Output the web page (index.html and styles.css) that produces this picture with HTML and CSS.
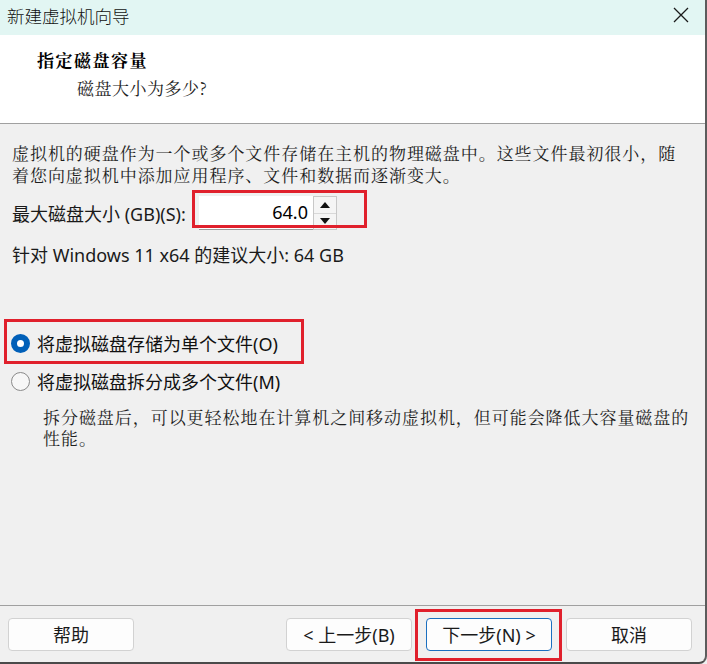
FILE: index.html
```html
<!DOCTYPE html>
<html lang="zh-CN">
<head>
<meta charset="utf-8">
<title>新建虚拟机向导</title>
<link rel="stylesheet" href="styles.css">
</head>
<body>
<div class="window">
  <div class="titlebar">
    <span class="title">新建虚拟机向导</span>
    <span class="close" aria-label="关闭">
      <svg width="16" height="16" viewBox="0 0 16 16"><path d="M1 1 L15 15 M15 1 L1 15" stroke="#1a1a1a" stroke-width="1.3" fill="none"/></svg>
    </span>
  </div>
  <div class="header">
    <div class="heading">指定磁盘容量</div>
    <div class="subheading">磁盘大小为多少?</div>
  </div>
  <div class="content">
    <p class="intro">虚拟机的硬盘作为一个或多个文件存储在主机的物理磁盘中。这些文件最初很小，随着您向虚拟机中添加应用程序、文件和数据而逐渐变大。</p>
    <div class="size-row">
      <label class="size-label">最大磁盘大小 (GB)(S):</label>
      <div class="spin">
        <div class="spin-input">64.0</div>
        <div class="spin-buttons">
          <div class="spin-btn"><svg width="12" height="8" viewBox="0 0 12 8"><path d="M6 1 L11 7 L1 7 Z" fill="#111"/></svg></div>
          <div class="spin-btn"><svg width="12" height="8" viewBox="0 0 12 8"><path d="M1 1 L11 1 L6 7 Z" fill="#111"/></svg></div>
        </div>
      </div>
      <div class="mark mark-spin"></div>
    </div>
    <div class="recommend">针对 Windows 11 x64 的建议大小: 64 GB</div>
    <div class="options">
      <div class="radio-row checked">
        <span class="radio"></span>
        <span class="radio-label">将虚拟磁盘存储为单个文件(O)</span>
        <div class="mark mark-radio"></div>
      </div>
      <div class="radio-row">
        <span class="radio"></span>
        <span class="radio-label">将虚拟磁盘拆分成多个文件(M)</span>
      </div>
      <p class="desc">拆分磁盘后，可以更轻松地在计算机之间移动虚拟机，但可能会降低大容量磁盘的性能。</p>
    </div>
  </div>
  <div class="footer">
    <button class="btn">帮助</button>
    <div class="btn-group">
      <button class="btn">&lt; 上一步(B)</button>
      <div class="btn-wrap">
        <button class="btn default">下一步(N) &gt;</button>
        <div class="mark mark-next"></div>
      </div>
      <button class="btn">取消</button>
    </div>
  </div>
</div>
</body>
</html>
```

FILE: styles.css
```css
html, body {
  margin: 0;
  padding: 0;
}
body {
  width: 707px;
  height: 664px;
  overflow: hidden;
  background: #f0f0f0;
  font-family: "Segoe UI", "Noto Sans", "Noto Sans CJK SC", sans-serif;
  color: #1a1a1a;
}
.window {
  box-sizing: border-box;
  width: 707px;
  height: 664px;
  display: flex;
  flex-direction: column;
  border-right: 2px solid #5c5c5c;
  border-bottom: 2px solid #4a4a4a;
  border-bottom-right-radius: 8px;
  overflow: hidden;
  background: #f0f0f0;
}
.titlebar {
  height: 35px;
  flex: none;
  background: #e2f6f3;
  display: flex;
  align-items: center;
  justify-content: space-between;
  padding: 0 16px 0 7px;
}
.title {
  font-family: "Noto Sans CJK SC", sans-serif;
  font-size: 17.5px;
  font-weight: 300;
  color: #111;
  line-height: 1;
  margin-top: -4px;
}
.close {
  display: flex;
  margin-top: -6px;
}
.header {
  flex: none;
  height: 89px;
  background: #fff;
  border-bottom: 1px solid #a0a0a0;
  box-sizing: border-box;
  padding-top: 14px;
  font-family: "Noto Serif CJK SC", "Noto Sans CJK SC", serif;
}
.heading {
  margin-left: 37px;
  font-size: 17px;
  font-weight: 700;
  line-height: 22px;
  letter-spacing: 1.5px;
  color: #000;
}
.subheading {
  margin-left: 77px;
  margin-top: 6px;
  font-size: 17px;
  line-height: 22px;
  color: #222;
  letter-spacing: 0.5px;
}
.content {
  flex: 1;
  padding: 18px 12px 0 12px;
}
.intro {
  margin: 0;
  font-family: "Noto Serif CJK SC", "Noto Sans CJK SC", serif;
  font-size: 17px;
  line-height: 22px;
  letter-spacing: 0.95px;
  color: #1e1e1e;
  width: 680px;
}
.size-row {
  position: relative;
  display: flex;
  align-items: center;
  margin-top: 10px;
  height: 34px;
}
.size-label {
  font-family: "Segoe UI", "Noto Sans", "Noto Sans CJK SC", sans-serif;
  font-size: 18px;
  width: 187px;
  white-space: nowrap;
}
.spin {
  display: flex;
  height: 34px;
}
.spin-input {
  width: 114px;
  height: 34px;
  box-sizing: border-box;
  background: #fff;
  border-bottom: 1px solid #9a9a9a;
  text-align: right;
  padding-right: 5px;
  font-size: 18px;
  line-height: 32px;
  color: #000;
}
.spin-buttons {
  display: flex;
  flex-direction: column;
  width: 24px;
  box-sizing: border-box;
  border: 1px solid #c8c8c8;
  background: #f5f5f5;
}
.spin-btn {
  flex: 1;
  display: flex;
  align-items: center;
  justify-content: center;
}
.spin-btn + .spin-btn {
  border-top: 1px solid #d8d8d8;
}
.recommend {
  margin-top: 14px;
  font-size: 18px;
  line-height: 22px;
  white-space: nowrap;
}
.options {
  margin-top: 58px;
}
.radio-row {
  position: relative;
  display: flex;
  align-items: center;
  height: 38px;
  margin-left: -1px;
}
.radio {
  box-sizing: border-box;
  width: 19px;
  height: 19px;
  border-radius: 50%;
  border: 1px solid #8a8a8a;
  background: #f7f7f7;
  flex: none;
}
.radio-row.checked .radio {
  border: 6px solid #005fb8;
  background: #fff;
}
.radio-label {
  margin-left: 7px;
  font-size: 18px;
  white-space: nowrap;
  color: #111;
}
.desc {
  margin: 6px 0 0 31px;
  font-family: "Noto Serif CJK SC", "Noto Sans CJK SC", serif;
  font-size: 17px;
  line-height: 21px;
  letter-spacing: 0.95px;
  color: #1e1e1e;
  width: 650px;
}
.footer {
  flex: none;
  height: 57px;
  box-sizing: border-box;
  border-top: 1px solid #a0a0a0;
  display: flex;
  justify-content: space-between;
  padding: 12px 13px 0 8px;
}
.btn-group {
  display: flex;
  gap: 14px;
}
.btn-wrap {
  position: relative;
  display: flex;
}
.btn {
  width: 126px;
  height: 33px;
  box-sizing: border-box;
  background: #fdfdfd;
  border: 1px solid #d2d2d2;
  border-radius: 4px;
  font-family: "Segoe UI", "Noto Sans", "Noto Sans CJK SC", sans-serif;
  font-size: 18px;
  color: #1a1a1a;
  padding: 0;
  line-height: 1;
}
.btn.default {
  border-color: #1a6fc0;
}
.mark {
  position: absolute;
  border: 3px solid #e0202c;
  box-sizing: border-box;
  pointer-events: none;
}
.mark-spin {
  left: 180px;
  top: -6px;
  width: 175px;
  height: 38px;
}
.mark-radio {
  left: -7px;
  top: -5px;
  width: 300px;
  height: 45px;
}
.mark-next {
  left: -11px;
  top: -9px;
  width: 147px;
  height: 52px;
}
```
